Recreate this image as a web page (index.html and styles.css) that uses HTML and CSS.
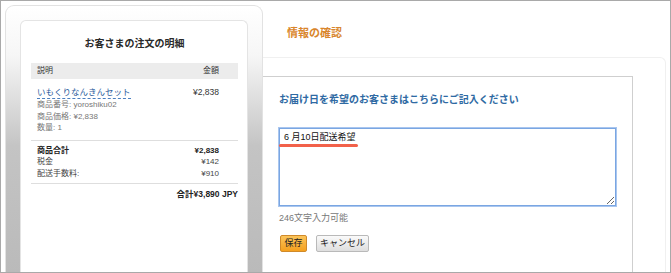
FILE: index.html
```html
<!DOCTYPE html>
<html lang="ja">
<head>
    <meta charset="UTF-8">
    <title>情報の確認</title>
    <link rel="stylesheet" href="styles.css">
</head>
<body>
    <div class="frame">
        <div class="summary-panel">
            <div class="summary-card">
                <h2>お客さまの注文の明細</h2>
                <div class="table-head">
                    <span>説明</span>
                    <span>金額</span>
                </div>
                <div class="item">
                    <div class="item-info">
                        <a class="item-name">いもくりなんきんセット</a>
                        <p>商品番号: yoroshiku02</p>
                        <p>商品価格: ¥2,838</p>
                        <p>数量: 1</p>
                    </div>
                    <div class="item-price">¥2,838</div>
                </div>
                <div class="totals">
                    <div class="total-row strong"><span>商品合計</span><span>¥2,838</span></div>
                    <div class="total-row"><span>税金</span><span>¥142</span></div>
                    <div class="total-row"><span>配送手数料:</span><span>¥910</span></div>
                </div>
                <div class="grand-total">合計¥3,890 JPY</div>
            </div>
        </div>

        <div class="main">
            <h1>情報の確認</h1>
            <div class="outer-box">
                <div class="form-box">
                    <h3>お届け日を希望のお客さまはこちらにご記入ください</h3>
                    <div class="note-wrap">
                        <textarea class="note">6 月10日配送希望</textarea>
                        <span class="marker"></span>
                    </div>
                    <div class="counter">246文字入力可能</div>
                    <div class="buttons">
                        <button class="save-btn">保存</button>
                        <button class="cancel-btn">キャンセル</button>
                    </div>
                </div>
            </div>
        </div>
    </div>
</body>
</html>
```

FILE: styles.css
```css
body {
    margin: 0;
    font-family: "Liberation Sans", "Noto Sans CJK JP", sans-serif;
    background-color: #fff;
}

.frame {
    width: 671px;
    height: 273px;
    box-sizing: border-box;
    border: 1px solid #a9a9a9;
    display: flex;
    overflow: hidden;
}

/* left: order summary */
.summary-panel {
    width: 258px;
    margin: 4px 0 0 4px;
    padding: 14px 14px 0 14px;
    box-sizing: border-box;
    border: 1px solid #e2e2e2;
    border-bottom: none;
    border-radius: 9px 9px 0 0;
    background: linear-gradient(#ffffff 0, #f6f6f6 50px, #c4c4c4 140px, #bababa 100%);
    flex-shrink: 0;
}

.summary-card {
    height: 100%;
    box-sizing: border-box;
    background-color: #fff;
    border: 1px solid #e4e4e4;
    border-bottom: none;
    border-radius: 6px 6px 0 0;
    padding: 16px 9px 0 10px;
    font-size: 8px;
}

.summary-card h2 {
    margin: 0 0 12px 0;
    font-size: 10px;
    line-height: 14px;
    text-align: center;
    color: #2a2a2a;
}

.table-head {
    display: flex;
    justify-content: space-between;
    background-color: #ececec;
    height: 16px;
    line-height: 16px;
    padding: 0 19px 0 6px;
    font-size: 8px;
    color: #333;
}

.item {
    display: flex;
    justify-content: space-between;
    padding: 8px 19px 6px 6px;
    border-bottom: 1px solid #dedede;
}

.item-name {
    display: block;
    width: fit-content;
    font-size: 8.5px;
    line-height: 11px;
    color: #2d5c9c;
    border-bottom: 1px dashed #4b7fc0;
}

.item-info p {
    margin: 0;
    font-size: 8px;
    line-height: 11.5px;
    color: #777;
}

.item-price {
    font-size: 8.5px;
    line-height: 11px;
    color: #333;
}

.totals {
    padding: 4px 19px 4px 6px;
    border-bottom: 1px solid #dedede;
}

.total-row {
    display: flex;
    justify-content: space-between;
    font-size: 8px;
    line-height: 11.5px;
    color: #444;
}

.total-row.strong {
    font-weight: bold;
    color: #222;
}

.grand-total {
    text-align: right;
    font-size: 8.5px;
    font-weight: bold;
    line-height: 12px;
    padding-top: 4px;
    color: #222;
}

/* right: confirmation form */
.main {
    flex: 1;
    display: flex;
    flex-direction: column;
}

.main h1 {
    margin: 0;
    padding: 24px 0 0 24px;
    height: 32px;
    font-size: 11px;
    line-height: 16px;
    color: #d9862d;
}

.outer-box {
    flex: 1;
    margin-right: 4px;
    border-top: 1px solid #f0f0f0;
    border-right: 1px solid #f0f0f0;
    border-radius: 0 6px 0 0;
    padding-top: 18px;
    display: flex;
}

.form-box {
    flex: 1;
    margin-right: 32px;
    border-top: 1px solid #cfcfcf;
    border-right: 1px solid #cfcfcf;
    padding: 16px 0 0 16px;
}

.form-box h3 {
    margin: 0 0 21px 0;
    font-size: 10px;
    line-height: 14px;
    color: #2f6aa3;
}

.note-wrap {
    position: relative;
    width: 337px;
}

.note {
    display: block;
    width: 337px;
    height: 78px;
    box-sizing: border-box;
    margin: 0;
    padding: 2px 4px;
    border: 1px solid #7aa6e2;
    box-shadow: 0 0 0 1px #a9c6ef;
    font-family: "Liberation Sans", "Noto Sans CJK JP", sans-serif;
    font-size: 9px;
    line-height: 12px;
    color: #111;
    resize: both;
}

/* red highlight drawn over the textarea text */
.marker {
    position: absolute;
    left: 0;
    top: 16px;
    width: 79px;
    height: 3px;
    border-radius: 2px;
    background-color: #f2614a;
}

.counter {
    margin-top: 6px;
    font-size: 9px;
    line-height: 12px;
    color: #777;
}

.buttons {
    display: flex;
    gap: 9px;
    margin-top: 11px;
    padding-left: 1px;
}

.save-btn,
.cancel-btn {
    height: 17px;
    padding: 0;
    font-family: "Liberation Sans", "Noto Sans CJK JP", sans-serif;
    font-size: 9px;
    line-height: 15px;
    color: #222;
    border-radius: 2px;
    cursor: pointer;
}

.save-btn {
    width: 27px;
    background: linear-gradient(#fbc45a, #f5a01e);
    border: 1px solid #d08a2a;
}

.cancel-btn {
    width: 53px;
    background: linear-gradient(#fafafa, #dedede);
    border: 1px solid #b9b9b9;
}
```
